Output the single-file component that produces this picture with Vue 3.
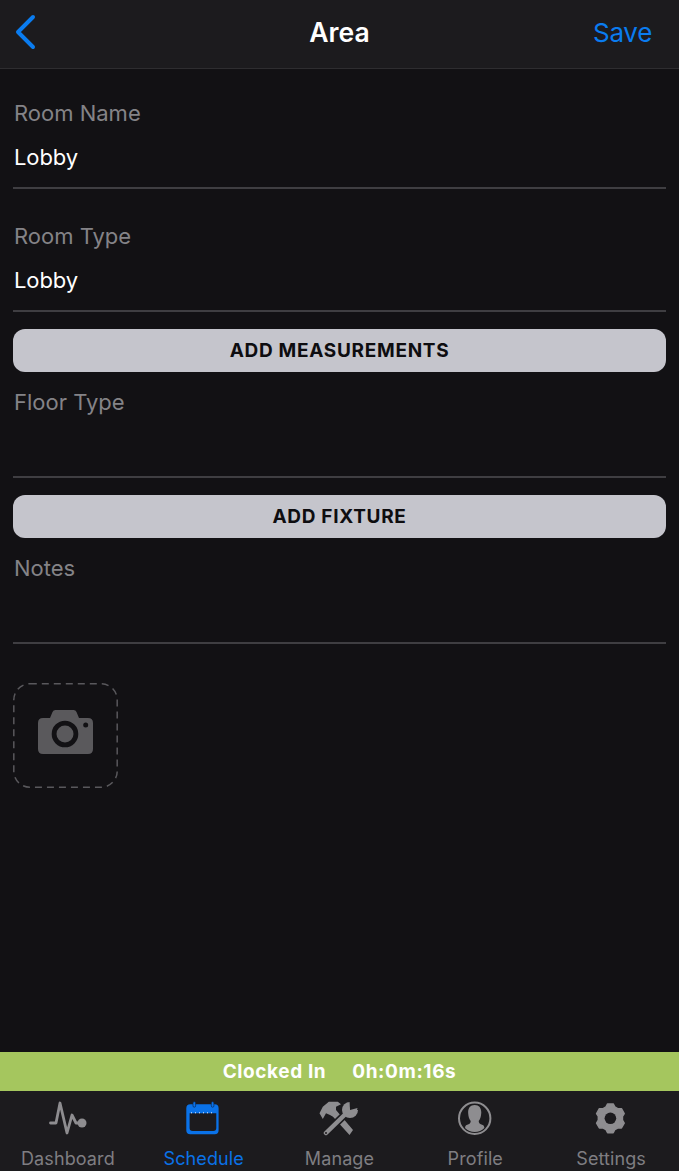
<template>
  <div class="screen">
    <header class="nav">
      <button class="back" aria-label="Back">
        <svg width="24" height="36" viewBox="0 0 24 36">
          <path d="M20 3 L5 18 L20 33" fill="none" stroke="#0a7cf0" stroke-width="4" stroke-linecap="round" stroke-linejoin="round" />
        </svg>
      </button>
      <h1>Area</h1>
      <span class="save">Save</span>
    </header>

    <main class="content">
      <div class="field first">
        <div class="label">Room Name</div>
        <div class="value">Lobby</div>
      </div>
      <div class="field">
        <div class="label">Room Type</div>
        <div class="value">Lobby</div>
      </div>
      <button class="action">ADD MEASUREMENTS</button>
      <div class="field compact">
        <div class="label">Floor Type</div>
        <div class="value"></div>
      </div>
      <button class="action">ADD FIXTURE</button>
      <div class="field compact">
        <div class="label">Notes</div>
        <div class="value"></div>
      </div>
      <svg class="photo" width="105" height="105" viewBox="0 0 105 105">
        <rect x="0.8" y="0.8" width="103.400" height="103.400" rx="16" fill="none" stroke="#59585c" stroke-width="1.500" stroke-dasharray="7 5" />
        <path transform="translate(25 27)" fill="#5a595c" fill-rule="evenodd" d="M5 8 H12 L14.500 2 Q15.300 0 17.500 0 H35.500 Q37.700 0 38.500 2 L41 8 H50 Q55 8 55 13 V39 Q55 44 50 44 H5 Q0 44 0 39 V13 Q0 8 5 8 Z M27 10.700 A13.300 13.300 0 1 0 27 37.300 A13.300 13.300 0 1 0 27 10.700 Z M27 15.500 A8.500 8.500 0 1 1 27 32.500 A8.500 8.500 0 1 1 27 15.500 Z M47.700 12.500 A2.500 2.500 0 1 0 47.700 17.500 A2.500 2.500 0 1 0 47.700 12.500 Z" />
      </svg>
    </main>

    <div class="clock">
      <span>Clocked In</span>
      <span>0h:0m:16s</span>
    </div>

    <nav class="tabs">
      <div v-for="tab in tabs" :key="tab.name" class="tab" :class="{ active: tab.active }">
        <svg class="tab-icon" width="40" height="36" viewBox="0 0 40 36" v-html="tab.icon"></svg>
        <span>{{ tab.name }}</span>
      </div>
    </nav>
  </div>
</template>

<script setup>
const gray = "#8e8d90";
const blue = "#0a72e8";
const bar = "#1c1b1e";

// six lobes, pointy at the top
const gearPath = () => {
  const cx = 19.4;
  const cy = 18.3;
  const pt = (r, deg) => {
    const a = (deg * Math.PI) / 180;
    return `${(cx + r * Math.cos(a)).toFixed(2)} ${(cy + r * Math.sin(a)).toFixed(2)}`;
  };
  let d = "";
  for (let i = 0; i < 6; i++) {
    const a = -90 + i * 60;
    d += `${i ? "L" : "M"}${pt(12.2, a - 21)} L${pt(14.6, a - 11)} L${pt(14.6, a + 11)} L${pt(12.2, a + 21)} `;
  }
  return d + "Z";
};

const tabs = [
  {
    name: "Dashboard",
    icon: `<path d="M2.500 23 H8 L12 3 L19 33 L24 15 L28 23 H33" fill="none" stroke="${gray}" stroke-width="2.800" stroke-linejoin="round" stroke-linecap="round"/><circle cx="34" cy="23" r="4.500" fill="${gray}"/>`,
  },
  {
    name: "Schedule",
    active: true,
    icon: `<path fill="${blue}" fill-rule="evenodd" d="M6.300 4.300 H30.600 Q34.600 4.300 34.600 8.300 V30.300 Q34.600 34.300 30.600 34.300 H6.300 Q2.300 34.300 2.300 30.300 V8.300 Q2.300 4.300 6.300 4.300 Z M5.600 13.300 V28 Q5.600 31 8.600 31 H29.300 Q32.300 31 32.300 28 V13.300 Z"/><path d="M7 12.800 H31" stroke="#e8eefc" stroke-width="1" stroke-dasharray="1 3"/><rect x="9" y="1.700" width="2.600" height="5.500" rx="1.300" fill="${blue}" stroke="#0c2a55" stroke-width="0.700"/><rect x="27.300" y="1.700" width="2.600" height="5.500" rx="1.300" fill="${blue}" stroke="#0c2a55" stroke-width="0.700"/>`,
  },
  {
    name: "Manage",
    icon: `<path fill="${gray}" d="M0.500 13.300 L3.800 6.700 L9.800 1.700 H18.800 L22 4.300 L17 6.700 V10 L34 30 L30.500 35 L14 16.700 L11 15 L7 13.300 L3.800 19 Z"/><path d="M7 33 L25.500 15" stroke="${bar}" stroke-width="7.500" stroke-linecap="round"/><path d="M7 33 L25.500 15" stroke="${gray}" stroke-width="4.500" stroke-linecap="round"/><circle cx="31" cy="10" r="8" fill="${gray}"/><path fill="${bar}" d="M31 10 L30.500 1 H34 L37 1.500 L40 5 V10 Z"/><path fill="${gray}" d="M29 2.500 L31 10 L38.500 8 L37.500 12 L28 12 L25 8 Z"/><circle cx="7" cy="33" r="1" fill="${bar}"/>`,
  },
  {
    name: "Profile",
    icon: `<circle cx="19.700" cy="18.300" r="15.700" fill="none" stroke="${gray}" stroke-width="2"/><path fill="${gray}" d="M19.700 5 C24.700 5 26.700 9 26.200 13.500 C26 17 25.200 19 23.700 21 C23.700 23 24.700 24 27.700 25 C28.500 25.300 29 25.600 29.400 28 A13.700 13.700 0 0 1 10 28 C10.400 25.600 10.900 25.300 11.700 25 C14.700 24 15.700 23 15.700 21 C14.200 19 13.400 17 13.200 13.500 C12.700 9 14.700 5 19.700 5 Z"/>`,
  },
  {
    name: "Settings",
    icon: `<path fill="${gray}" stroke="${gray}" stroke-width="1.500" stroke-linejoin="round" d="${gearPath()}"/><circle cx="19.400" cy="18.300" r="5.800" fill="${bar}"/>`,
  },
];
</script>

<style>
html,
body {
  margin: 0;
  background: #121114;
}
</style>

<style scoped>
.screen {
  width: 679px;
  height: 1171px;
  display: flex;
  flex-direction: column;
  overflow: hidden;
  background: #121114;
  font-family: Inter, "Liberation Sans", sans-serif;
}

.nav {
  height: 64px;
  flex: none;
  position: relative;
  display: flex;
  align-items: center;
  justify-content: space-between;
  padding: 0 27px 4px 13px;
  background: #1c1b1e;
  border-bottom: 1px solid #2e2d30;
}

.nav h1 {
  margin: 0;
  position: absolute;
  left: 0;
  right: 0;
  text-align: center;
  font-size: 26.500px;
  font-weight: 600;
  color: #fff;
}

.back {
  padding: 0;
  border: none;
  background: none;
  display: flex;
}

.save {
  font-size: 26px;
  letter-spacing: -0.3px;
  color: #0a7cf0;
}

.content {
  flex: 1;
  padding: 0 13px;
}

.field {
  height: 121px;
  border-bottom: 2px solid #3f3e42;
  display: flex;
  flex-direction: column;
}

.field.first {
  height: 118px;
}

.field .label {
  margin-top: 33px;
  padding-left: 1px;
  height: 28px;
  line-height: 28px;
  font-size: 22px;
  color: #848387;
}

.field.first .label {
  margin-top: 30px;
}

.field .value {
  margin-top: 16px;
  padding-left: 1px;
  height: 28px;
  line-height: 28px;
  font-size: 22px;
  letter-spacing: -0.1px;
  color: #fff;
}

.field.compact {
  height: 104px;
}

.field.compact .label {
  margin-top: 16px;
}

.action {
  display: block;
  width: 100%;
  height: 43px;
  margin-top: 17px;
  padding: 0 0 0 0;
  border: none;
  border-radius: 12px;
  background: #c5c5cc;
  color: #0e0d10;
  font-family: inherit;
  font-size: 19px;
  font-weight: 700;
  letter-spacing: 0.7px;
}

.photo {
  display: block;
  margin-top: 39px;
}

.clock {
  height: 39px;
  flex: none;
  display: flex;
  align-items: center;
  justify-content: center;
  gap: 26px;
  background: #a5c65e;
  color: #fff;
  font-size: 19px;
  font-weight: 700;
  letter-spacing: 0.6px;
}

.tabs {
  height: 80px;
  flex: none;
  display: grid;
  grid-template-columns: repeat(5, 1fr);
  background: #1c1b1e;
}

.tab {
  display: flex;
  flex-direction: column;
  align-items: center;
  padding-top: 9px;
  color: #7f7e82;
  font-size: 18px;
  line-height: 24px;
  letter-spacing: 0.1px;
}

.tab.active {
  color: #0a72e8;
}

.tab-icon {
  margin-bottom: 11px;
}
</style>
